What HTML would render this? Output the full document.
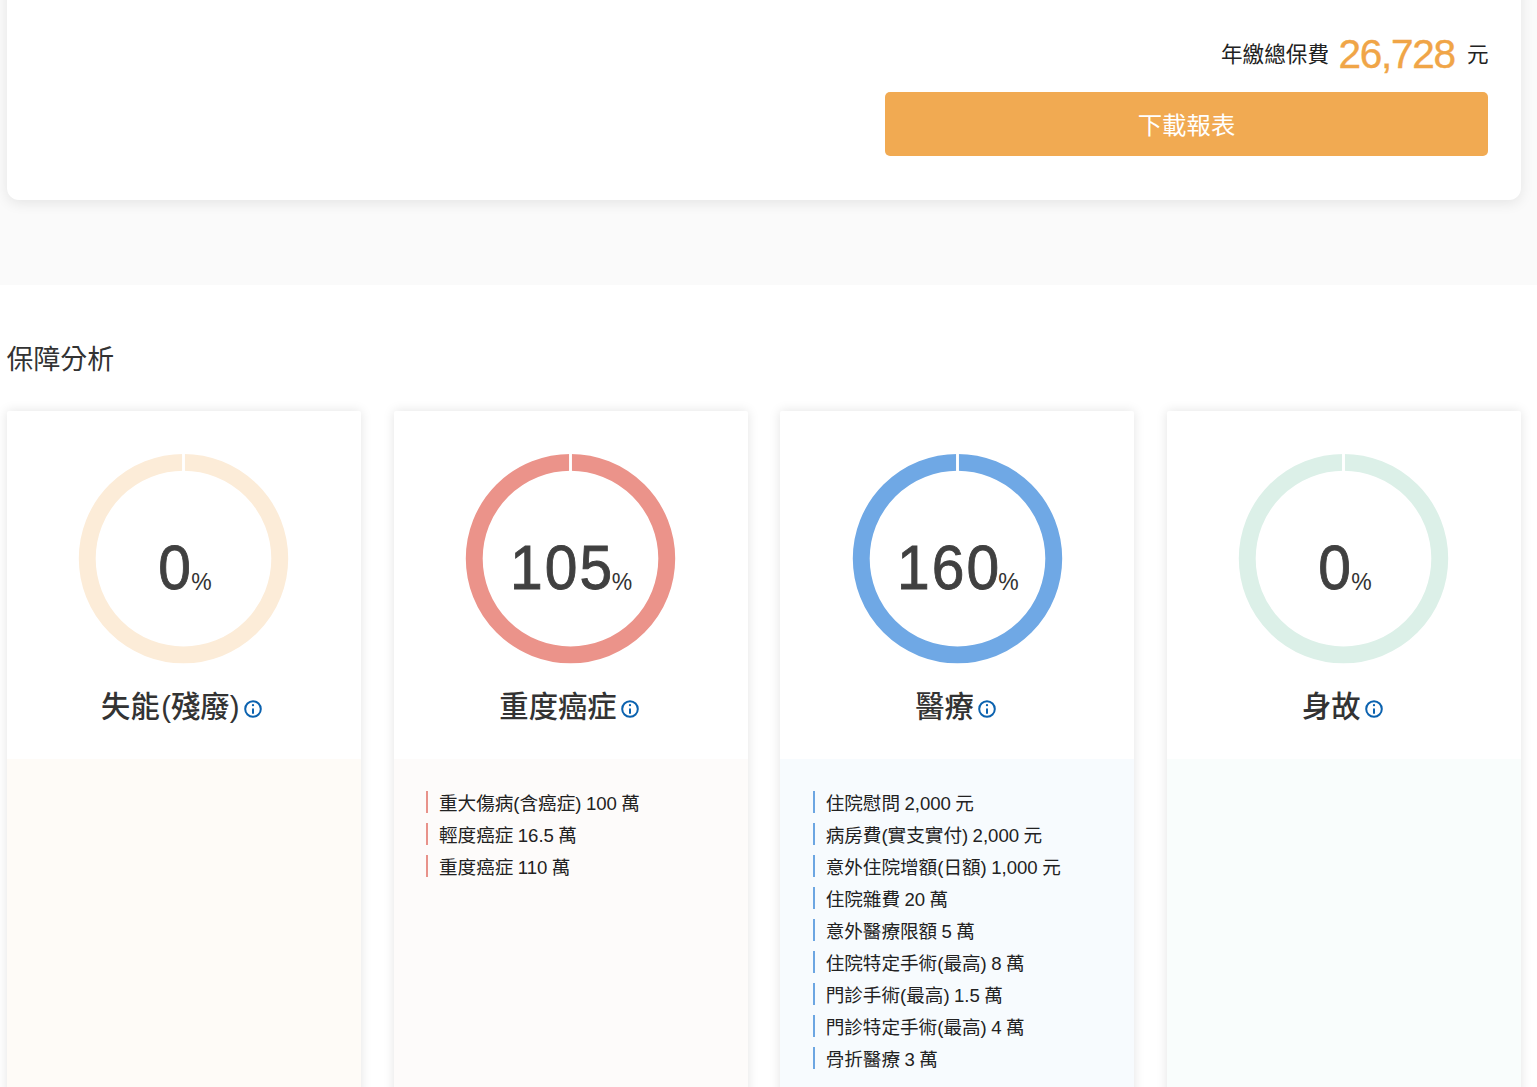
<!DOCTYPE html>
<html lang="zh-Hant">
<head>
<meta charset="utf-8">
<title>保障分析</title>
<style>
*{box-sizing:border-box;margin:0;padding:0}
html,body{width:1537px;height:1087px;overflow:hidden;background:#fff}
body{position:relative;font-family:"Liberation Sans","Noto Sans CJK TC",sans-serif;color:#333;-webkit-font-smoothing:antialiased}
.abs{position:absolute}
.topbg{left:0;top:0;width:1537px;height:285px;background:#fafafa}
.topcard{left:7px;top:-40px;width:1514px;height:240px;background:#fff;border-radius:12px;box-shadow:0 3px 14px rgba(0,0,0,.09)}
.t{position:absolute;white-space:nowrap;line-height:1}
.fee-label{left:1221px;top:44px;font-size:21.6px;color:#222}
.fee-num{left:1338.5px;top:34px;font-size:40.6px;letter-spacing:-1.3px;color:#f0a547;-webkit-text-stroke:0.4px #f0a547}
.fee-unit{left:1467px;top:44px;font-size:21.6px;color:#222}
.btn{left:885px;top:92px;width:603px;height:64px;background:#f1aa52;border-radius:5px;color:#fff;font-size:24.4px;text-align:center;line-height:68px}
.h2{left:6.6px;top:346.6px;font-size:26.9px;color:#333}
.card{position:absolute;top:411px;width:354px;height:700px;background:#fff;border-radius:2px;box-shadow:0 0 12px rgba(0,0,0,.115);overflow:hidden}
.card .low{position:absolute;left:0;top:348px;width:100%;height:360px}
.ring{position:absolute;top:453px;width:212px;height:212px;z-index:5}
.num{position:absolute;left:0;width:100%;top:125.4px;text-align:center;white-space:nowrap;line-height:1;color:#404040}
.num b{display:inline-block;font-weight:500;font-size:63.2px;letter-spacing:2.2px;transform:scaleX(.93);margin:0 -6.5px 0 -3.1px;-webkit-text-stroke:0.9px #404040}
.num b.z{margin:0 -3.6px 0 1.2px}
.num i{font-style:normal;font-size:23px;color:#333;position:relative;top:1px}
.title{position:absolute;left:-1.7px;width:100%;top:281px;text-align:center;white-space:nowrap;line-height:1;font-size:29.3px;font-weight:500;color:#333}
.info{display:inline-block;width:18px;height:18px;vertical-align:-1.2px;margin-left:4.1px}
ul{list-style:none;position:absolute;left:32.5px;top:32px}
li{border-left:2px solid var(--c);height:22px;line-height:26px;margin-bottom:10px;padding-left:10.8px;font-size:18.6px;word-spacing:-0.04em;white-space:nowrap;color:#222}
</style>
</head>
<body>
<div class="abs topbg"></div>
<div class="abs topcard"></div>
<div class="t fee-label">年繳總保費</div>
<div class="t fee-num">26,728</div>
<div class="t fee-unit">元</div>
<div class="abs btn">下載報表</div>
<div class="t h2">保障分析</div>

<div class="card" style="left:7px">
  <div class="num"><b class="z">0</b><i>%</i></div>
  <div class="title" style="left:-2.7px">失能<span style="margin-left:1.6px">(殘廢)</span><svg class="info" viewBox="0 0 18 18"><circle cx="9" cy="9" r="7.8" fill="none" stroke="#0b62af" stroke-width="2"/><circle cx="9" cy="5.2" r="1.15" fill="#0b62af"/><rect x="8" y="8.2" width="2" height="5.7" rx="1" fill="#0b62af"/></svg></div>
  <div class="low" style="background:#fefbf7"></div>
</div>

<div class="card" style="left:393.67px">
  <div class="num"><b>105</b><i>%</i></div>
  <div class="title">重度癌症<svg class="info" viewBox="0 0 18 18"><circle cx="9" cy="9" r="7.8" fill="none" stroke="#0b62af" stroke-width="2"/><circle cx="9" cy="5.2" r="1.15" fill="#0b62af"/><rect x="8" y="8.2" width="2" height="5.7" rx="1" fill="#0b62af"/></svg></div>
  <div class="low" style="background:#fdfbfa">
    <ul style="--c:#e8928a">
      <li>重大傷病(含癌症) 100 萬</li>
      <li>輕度癌症 16.5 萬</li>
      <li>重度癌症 110 萬</li>
    </ul>
  </div>
</div>

<div class="card" style="left:780.33px">
  <div class="num"><b>160</b><i>%</i></div>
  <div class="title">醫療<svg class="info" viewBox="0 0 18 18"><circle cx="9" cy="9" r="7.8" fill="none" stroke="#0b62af" stroke-width="2"/><circle cx="9" cy="5.2" r="1.15" fill="#0b62af"/><rect x="8" y="8.2" width="2" height="5.7" rx="1" fill="#0b62af"/></svg></div>
  <div class="low" style="background:#f7fbfe">
    <ul style="--c:#6ca6e2">
      <li>住院慰問 2,000 元</li>
      <li>病房費(實支實付) 2,000 元</li>
      <li>意外住院增額(日額) 1,000 元</li>
      <li>住院雜費 20 萬</li>
      <li>意外醫療限額 5 萬</li>
      <li>住院特定手術(最高) 8 萬</li>
      <li>門診手術(最高) 1.5 萬</li>
      <li>門診特定手術(最高) 4 萬</li>
      <li>骨折醫療 3 萬</li>
    </ul>
  </div>
</div>

<div class="card" style="left:1167px">
  <div class="num"><b class="z">0</b><i>%</i></div>
  <div class="title">身故<svg class="info" viewBox="0 0 18 18"><circle cx="9" cy="9" r="7.8" fill="none" stroke="#0b62af" stroke-width="2"/><circle cx="9" cy="5.2" r="1.15" fill="#0b62af"/><rect x="8" y="8.2" width="2" height="5.7" rx="1" fill="#0b62af"/></svg></div>
  <div class="low" style="background:#f9fdfc"></div>
</div>
<svg class="ring" style="left:78px" viewBox="0 0 212 212"><g transform="translate(.5 .58)"><circle cx="105" cy="105" r="96.25" fill="none" stroke="#fcecd8" stroke-width="16.9"/><rect x="103.55" y="0" width="2.9" height="19" fill="#fff"/></g></svg>
<svg class="ring" style="left:465px" viewBox="0 0 212 212"><g transform="translate(.5 .58)"><circle cx="105" cy="105" r="96.25" fill="none" stroke="#eb938a" stroke-width="16.9"/><rect x="103.55" y="0" width="2.9" height="19" fill="#fff"/></g></svg>
<svg class="ring" style="left:852px" viewBox="0 0 212 212"><g transform="translate(.5 .58)"><circle cx="105" cy="105" r="96.25" fill="none" stroke="#6fa8e5" stroke-width="16.9"/><rect x="103.55" y="0" width="2.9" height="19" fill="#fff"/></g></svg>
<svg class="ring" style="left:1238px" viewBox="0 0 212 212"><g transform="translate(.5 .58)"><circle cx="105" cy="105" r="96.25" fill="none" stroke="#dcf0e8" stroke-width="16.9"/><rect x="103.55" y="0" width="2.9" height="19" fill="#fff"/></g></svg>
</body>
</html>
